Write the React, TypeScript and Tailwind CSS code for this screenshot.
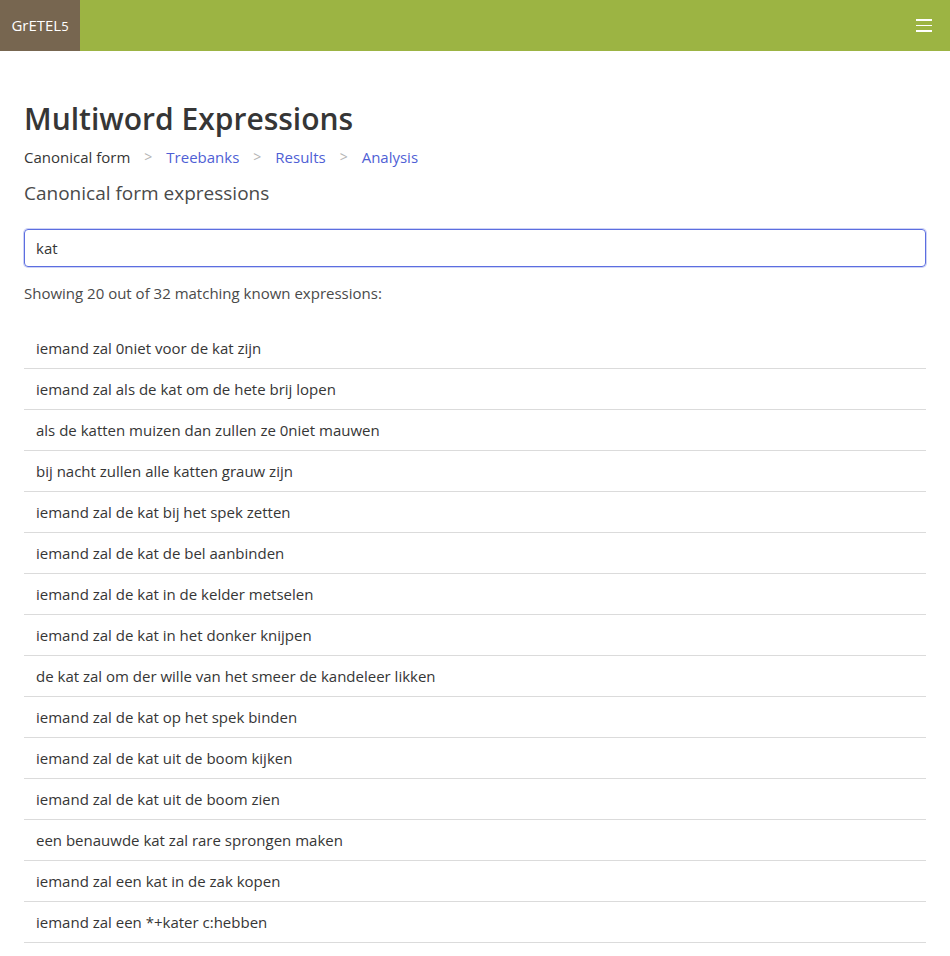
import React from 'react';

const items = [
  'iemand zal 0niet voor de kat zijn',
  'iemand zal als de kat om de hete brij lopen',
  'als de katten muizen dan zullen ze 0niet mauwen',
  'bij nacht zullen alle katten grauw zijn',
  'iemand zal de kat bij het spek zetten',
  'iemand zal de kat de bel aanbinden',
  'iemand zal de kat in de kelder metselen',
  'iemand zal de kat in het donker knijpen',
  'de kat zal om der wille van het smeer de kandeleer likken',
  'iemand zal de kat op het spek binden',
  'iemand zal de kat uit de boom kijken',
  'iemand zal de kat uit de boom zien',
  'een benauwde kat zal rare sprongen maken',
  'iemand zal een kat in de zak kopen',
  'iemand zal een *+kater c:hebben',
];

const Sep = () => <span className="mx-[14px] text-[14px] text-[#b5b5b5]">&gt;</span>;

export default function App() {
  return (
    <div className="min-h-screen bg-white text-[#363636] font-['Open_Sans',sans-serif]">
      <header className="flex h-[51px] bg-[#9cb443]">
        <div className="flex w-[80px] items-center justify-center bg-[#776650] text-white">
          <span className="text-[15px]">
            GrETEL<span className="text-[13px]">5</span>
          </span>
        </div>
        <div className="flex-1" />
        <button className="flex w-[52px] flex-col items-center justify-center gap-[4px]">
          <span className="block h-[1.5px] w-[16px] bg-white" />
          <span className="block h-[1.5px] w-[16px] bg-white" />
          <span className="block h-[1.5px] w-[16px] bg-white" />
        </button>
      </header>

      <main className="px-6 pt-[46px]">
        <h1 className="text-[30px] font-semibold leading-[44px] text-[#363636]">Multiword Expressions</h1>
        <nav className="mt-[5px] flex items-center text-[15px] leading-[22px]">
          <span className="text-[#363636]">Canonical form</span>
          <Sep />
          <span className="text-[#4f5fd5]">Treebanks</span>
          <Sep />
          <span className="text-[#4f5fd5]">Results</span>
          <Sep />
          <span className="text-[#4f5fd5]">Analysis</span>
        </nav>
        <h2 className="mt-[13px] text-[19px] leading-[24px] text-[#4a4a4a]">Canonical form expressions</h2>

        <input
          defaultValue="kat"
          className="mt-[24px] h-[38px] w-full rounded-[4px] border border-[#5c6ee0] px-[11px] text-[15px] text-[#363636] outline-none shadow-[0_0_0_1px_rgba(92,110,224,0.3)]"
        />

        <p className="mt-[15px] text-[15px] leading-[22px] text-[#4a4a4a]">Showing 20 out of 32 matching known expressions:</p>

        <ul className="mt-[24px]">
          {items.map((t) => (
            <li key={t} className="border-b border-[#dbdbdb] px-3 py-[9px] text-[15px] leading-[22px] text-[#363636]">
              {t}
            </li>
          ))}
        </ul>
      </main>
    </div>
  );
}
